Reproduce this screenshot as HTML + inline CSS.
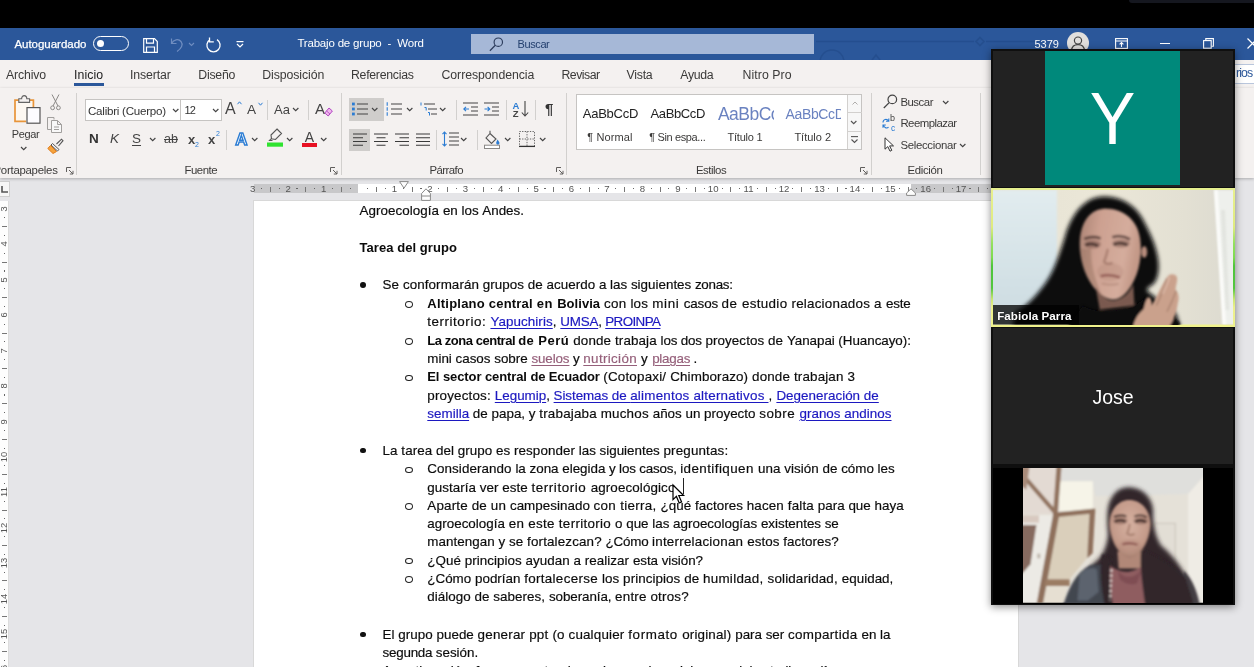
<!DOCTYPE html>
<html lang="es"><head><meta charset="utf-8"><title>Trabajo de grupo - Word</title>
<style>
*{box-sizing:border-box;margin:0;padding:0}
html,body{width:1254px;height:667px;overflow:hidden;background:#e5e5e8}
body{position:relative;font-family:"Liberation Sans",sans-serif;color:#262626;font-size:12px}
.a{position:absolute}
.gl{left:0;top:0;width:100%;height:100%;will-change:transform}
.t{position:absolute;white-space:nowrap;line-height:1}
#blk{left:0;top:0;width:1254px;height:28px;background:#000}
#ttl{left:0;top:28px;width:1254px;height:32px;background:#2b579a}
#ttl .t{color:#fff;font-size:11.5px}
#srch{left:471px;top:34px;width:343px;height:20px;background:#a6b8d7}
#tabs{left:0;top:60px;width:1254px;height:28px;background:#f4f1f0}
#tabs .t{font-size:12.3px;color:#3b3a39;top:9px}
#rib{left:0;top:88px;width:1254px;height:89.5px;background:#f4f1f0;box-shadow:0 1px 3px rgba(0,0,0,.25)}
#rib .t{font-size:11.4px;color:#3b3a39}
.sep{position:absolute;width:1px;background:#d2d0ce}
.box{position:absolute;background:#fff;border:1px solid #c6c4c2}
.hl{position:absolute;background:#cfcdcb}
svg{position:absolute;overflow:visible}
#page{left:254px;top:201.4px;width:764px;height:480px;background:#fff;box-shadow:0 0 0 1px #d8d8d8}
.ln{position:absolute;white-space:nowrap;font-size:13.4px;line-height:18px;height:18px;color:#0c0c0c;-webkit-text-stroke:0.18px #0c0c0c}
.ln b{font-weight:bold;color:#0a0a0a;font-size:13px;-webkit-text-stroke:0}
.lk{color:#1c18c0;-webkit-text-stroke-color:#1c18c0;text-decoration:underline;text-decoration-thickness:1px;text-underline-offset:2px}
.vl{color:#955f7a;-webkit-text-stroke-color:#955f7a;text-decoration:underline;text-decoration-thickness:1px;text-underline-offset:2px}
.bu{position:absolute;width:5.8px;height:5.8px;border-radius:50%;background:#111}
.ci{position:absolute;width:8px;height:6.8px;border-radius:50%;border:1.15px solid #222}
#zm{left:991px;top:49px;width:244px;height:556px;background:#0f0f0f;box-shadow:0 2px 8px rgba(0,0,0,.45)}
</style></head>
<body>
<div class="a" id="page"></div>
<div class="a" id="doctext" style="left:0;top:0;width:1254px;height:667px;will-change:transform">
<div class="ln" id="l1" style="left:359.5px;top:202.4px"><span class="sg" id="l1_0" style="letter-spacing:0.058px">Agroecología </span><span class="sg" id="l1_1" style="letter-spacing:-0.003px">en los </span><span class="sg" id="l1_2" style="letter-spacing:-0.017px">Andes.</span></div>
<div class="ln" id="l2" style="left:359.5px;top:239.4px"><span class="sg" id="l2_0" style="letter-spacing:0.062px"><b>Tarea del grupo</b></span></div>
<div class="ln" id="l3" style="left:382.6px;top:276.4px"><span class="sg" id="l3_0" style="letter-spacing:0.080px">Se conformarán </span><span class="sg" id="l3_1" style="letter-spacing:0.039px">grupos de acuerdo </span><span class="sg" id="l3_2" style="letter-spacing:0.004px">a las siguientes </span><span class="sg" id="l3_3" style="letter-spacing:-0.309px">zonas:</span></div>
<div class="bu" style="left:359.9px;top:282.0px"></div>
<div class="ln" id="l4" style="left:427.3px;top:295.0px"><span class="sg" id="l4_0" style="letter-spacing:0.228px"><b>Altiplano </b></span><span class="sg" id="l4_1" style="letter-spacing:0.206px"><b>central </b></span><span class="sg" id="l4_2" style="letter-spacing:0.568px"><b>en </b></span><span class="sg" id="l4_3" style="letter-spacing:0.043px"><b>Bolivia</b> </span><span class="sg" id="l4_4" style="letter-spacing:0.297px">con </span><span class="sg" id="l4_5" style="letter-spacing:0.239px">los </span><span class="sg" id="l4_6" style="letter-spacing:0.664px">mini </span><span class="sg" id="l4_7" style="letter-spacing:-0.151px">casos </span><span class="sg" id="l4_8" style="letter-spacing:0.592px">de </span><span class="sg" id="l4_9" style="letter-spacing:0.324px">estudio </span><span class="sg" id="l4_10" style="letter-spacing:0.219px">relacionados </span><span class="sg" id="l4_11" style="letter-spacing:0.414px">a </span><span class="sg" id="l4_12" style="letter-spacing:-0.178px">este</span></div>
<div class="ci" style="left:405.0px;top:301.2px"></div>
<div class="ln" id="l5" style="left:427.3px;top:313.2px"><span class="sg" id="l5_0" style="letter-spacing:0.549px">territorio: </span><span class="sg" id="l5_1" style="letter-spacing:0.076px"><span class="lk">Yapuchiris</span>, </span><span class="sg" id="l5_2" style="letter-spacing:-0.209px"><span class="lk">UMSA</span>, </span><span class="sg" id="l5_3" style="letter-spacing:-0.583px"><span class="lk">PROINPA</span></span></div>
<div class="ln" id="l6" style="left:427.3px;top:331.6px"><span class="sg" id="l6_0" style="letter-spacing:-0.459px"><b>La zona central </b></span><span class="sg" id="l6_1" style="letter-spacing:0.460px"><b>de Perú</b> </span><span class="sg" id="l6_2" style="letter-spacing:0.120px">donde trabaja </span><span class="sg" id="l6_3" style="letter-spacing:-0.170px">los dos </span><span class="sg" id="l6_4" style="letter-spacing:0.088px">proyectos de </span><span class="sg" id="l6_5" style="letter-spacing:-0.059px">Yanapai </span><span class="sg" id="l6_6" style="letter-spacing:-0.040px">(Huancayo):</span></div>
<div class="ci" style="left:405.0px;top:337.8px"></div>
<div class="ln" id="l7" style="left:427.3px;top:349.9px"><span class="sg" id="l7_0" style="letter-spacing:-0.006px">mini casos sobre </span><span class="sg" id="l7_1" style="letter-spacing:-0.107px"><span class="vl">suelos</span> y </span><span class="sg" id="l7_2" style="letter-spacing:0.345px"><span class="vl">nutrición</span> y </span><span class="sg" id="l7_3" style="letter-spacing:-0.265px"><span class="vl">plagas</span> .</span></div>
<div class="ln" id="l8" style="left:427.3px;top:368.3px"><span class="sg" id="l8_0" style="letter-spacing:-0.093px"><b>El sector central </b></span><span class="sg" id="l8_1" style="letter-spacing:-0.157px"><b>de Ecuador</b> </span><span class="sg" id="l8_2" style="letter-spacing:0.205px">(Cotopaxi/ </span><span class="sg" id="l8_3" style="letter-spacing:0.119px">Chimborazo) </span><span class="sg" id="l8_4" style="letter-spacing:0.155px">donde trabajan 3</span></div>
<div class="ci" style="left:405.0px;top:374.5px"></div>
<div class="ln" id="l9" style="left:427.3px;top:386.6px"><span class="sg" id="l9_0" style="letter-spacing:0.182px">proyectos: </span><span class="sg" id="l9_1" style="letter-spacing:-0.003px"><span class="lk">Legumip</span>, </span><span class="sg" id="l9_2" style="letter-spacing:-0.067px"><span class="lk">Sistemas de </span></span><span class="sg" id="l9_3" style="letter-spacing:0.220px"><span class="lk">alimentos alternativos </span>, </span><span class="sg" id="l9_4" style="letter-spacing:0.027px"><span class="lk">Degeneración de</span></span></div>
<div class="ln" id="l10" style="left:427.3px;top:404.9px"><span class="sg" id="l10_0" style="letter-spacing:0.018px"><span class="lk">semilla</span> de papa, y </span><span class="sg" id="l10_1" style="letter-spacing:0.190px">trabajaba muchos </span><span class="sg" id="l10_2" style="letter-spacing:0.003px">años un proyecto </span><span class="sg" id="l10_3" style="letter-spacing:0.497px">sobre </span><span class="sg" id="l10_4" style="letter-spacing:0.037px"><span class="lk">granos andinos</span></span></div>
<div class="ln" id="l11" style="left:382.6px;top:441.9px"><span class="sg" id="l11_0" style="letter-spacing:0.051px">La tarea del grupo </span><span class="sg" id="l11_1" style="letter-spacing:0.070px">es responder </span><span class="sg" id="l11_2" style="letter-spacing:-0.011px">las siguientes </span><span class="sg" id="l11_3" style="letter-spacing:0.152px">preguntas:</span></div>
<div class="bu" style="left:359.9px;top:447.5px"></div>
<div class="ln" id="l12" style="left:427.3px;top:460.4px"><span class="sg" id="l12_0" style="letter-spacing:0.076px">Considerando </span><span class="sg" id="l12_1" style="letter-spacing:-0.007px">la zona elegida </span><span class="sg" id="l12_2" style="letter-spacing:-0.199px">y los casos, </span><span class="sg" id="l12_3" style="letter-spacing:0.429px">identifiquen </span><span class="sg" id="l12_4" style="letter-spacing:0.052px">una visión </span><span class="sg" id="l12_5" style="letter-spacing:-0.018px">de cómo les</span></div>
<div class="ci" style="left:405.0px;top:466.6px"></div>
<div class="ln" id="l13" style="left:427.3px;top:478.7px"><span class="sg" id="l13_0" style="letter-spacing:0.035px">gustaría ver este </span><span class="sg" id="l13_1" style="letter-spacing:0.587px">territorio </span><span class="sg" id="l13_2" style="letter-spacing:0.108px">agroecológico</span></div>
<div class="ln" id="l14" style="left:427.3px;top:497.2px"><span class="sg" id="l14_0" style="letter-spacing:0.169px">Aparte de un </span><span class="sg" id="l14_1" style="letter-spacing:0.027px">campesinado </span><span class="sg" id="l14_2" style="letter-spacing:0.311px">con tierra, </span><span class="sg" id="l14_3" style="letter-spacing:0.035px">¿qué factores </span><span class="sg" id="l14_4" style="letter-spacing:0.154px">hacen falta </span><span class="sg" id="l14_5" style="letter-spacing:0.013px">para que haya</span></div>
<div class="ci" style="left:405.0px;top:503.4px"></div>
<div class="ln" id="l15" style="left:427.3px;top:515.0px"><span class="sg" id="l15_0" style="letter-spacing:0.019px">agroecología </span><span class="sg" id="l15_1" style="letter-spacing:0.311px">en este territorio </span><span class="sg" id="l15_2" style="letter-spacing:-0.008px">o que las </span><span class="sg" id="l15_3" style="letter-spacing:-0.003px">agroecologías </span><span class="sg" id="l15_4" style="letter-spacing:-0.020px">existentes se</span></div>
<div class="ln" id="l16" style="left:427.3px;top:533.1px"><span class="sg" id="l16_0" style="letter-spacing:0.052px">mantengan y se </span><span class="sg" id="l16_1" style="letter-spacing:0.141px">fortalezcan? </span><span class="sg" id="l16_2" style="letter-spacing:-0.204px">¿Cómo </span><span class="sg" id="l16_3" style="letter-spacing:0.227px">interrelacionan </span><span class="sg" id="l16_4" style="letter-spacing:0.052px">estos factores?</span></div>
<div class="ln" id="l17" style="left:427.3px;top:551.5px"><span class="sg" id="l17_0" style="letter-spacing:0.037px">¿Qué principios </span><span class="sg" id="l17_1" style="letter-spacing:0.058px">ayudan a realizar </span><span class="sg" id="l17_2" style="letter-spacing:-0.052px">esta visión?</span></div>
<div class="ci" style="left:405.0px;top:557.7px"></div>
<div class="ln" id="l18" style="left:427.3px;top:570.0px"><span class="sg" id="l18_0" style="letter-spacing:0.010px">¿Cómo podrían </span><span class="sg" id="l18_1" style="letter-spacing:0.316px">fortalecerse </span><span class="sg" id="l18_2" style="letter-spacing:0.069px">los principios de </span><span class="sg" id="l18_3" style="letter-spacing:0.280px">humildad, </span><span class="sg" id="l18_4" style="letter-spacing:0.145px">solidaridad, </span><span class="sg" id="l18_5" style="letter-spacing:0.039px">equidad,</span></div>
<div class="ci" style="left:405.0px;top:576.2px"></div>
<div class="ln" id="l19" style="left:427.3px;top:588.2px"><span class="sg" id="l19_0" style="letter-spacing:0.050px">diálogo de saberes, </span><span class="sg" id="l19_1" style="letter-spacing:-0.073px">soberanía, </span><span class="sg" id="l19_2" style="letter-spacing:0.186px">entre otros?</span></div>
<div class="ln" id="l20" style="left:382.6px;top:626.0px"><span class="sg" id="l20_0" style="letter-spacing:0.029px">El grupo puede </span><span class="sg" id="l20_1" style="letter-spacing:0.215px">generar ppt </span><span class="sg" id="l20_2" style="letter-spacing:0.169px">(o cualquier </span><span class="sg" id="l20_3" style="letter-spacing:0.597px">formato </span><span class="sg" id="l20_4" style="letter-spacing:0.174px">original) </span><span class="sg" id="l20_5" style="letter-spacing:-0.027px">para ser </span><span class="sg" id="l20_6" style="letter-spacing:0.339px">compartida </span><span class="sg" id="l20_7" style="letter-spacing:-0.029px">en la</span></div>
<div class="bu" style="left:359.9px;top:631.6px"></div>
<div class="ln" id="l21" style="left:382.6px;top:643.8px"><span class="sg" id="l21_0" style="letter-spacing:-0.251px">segunda </span><span class="sg" id="l21_1" style="letter-spacing:0.023px">sesión.</span></div>
<div class="ln" id="l22" style="left:382.6px;top:662.2px"><span class="sg" id="l22_0" style="letter-spacing:-0.096px">A continuación, favor encontrar los enlaces a los mini casos del estudio en línea</span></div>
<div class="bu" style="left:359.9px;top:667.8px"></div>
</div>
<div class="a" style="left:683px;top:478px;width:1.1px;height:16px;background:#222"></div>
<svg style="left:672.2px;top:484px" width="13" height="20" viewBox="0 0 13 20"><path d="M1 1 V15.6 L4.4 12.4 L7.2 19 L9.6 17.9 L6.8 11.5 H11.6 Z" fill="#fff" stroke="#000" stroke-width="1.2"/></svg>
<div class="a gl" style="width:1254px;height:667px">
<div class="a" style="left:0;top:181px;width:10px;height:16px;background:#f6f6f6;border:1px solid #cfcfcf;border-left:0"></div>
<svg style="left:1px;top:186px" width="7" height="7"><path d="M1 0 V6 H7" fill="none" stroke="#555" stroke-width="1.6"/></svg>
<div class="a" style="left:254px;top:183.6px;width:104px;height:9.4px;background:#c8c8ca"></div>
<div class="a" style="left:358px;top:183.6px;width:553px;height:9.4px;background:#fff"></div>
<div class="a" style="left:911px;top:183.6px;width:85px;height:9.4px;background:#c8c8ca"></div>
<span class="t" style="left:242.7px;top:184px;width:20px;text-align:center;font-size:9.6px;color:#555">3</span>
<div class="a" style="left:261.0px;top:188px;width:1.2px;height:1.4px;background:#666"></div>
<div class="a" style="left:269.9px;top:186.5px;width:1px;height:5px;background:#777"></div>
<div class="a" style="left:278.7px;top:188px;width:1.2px;height:1.4px;background:#666"></div>
<span class="t" style="left:278.2px;top:184px;width:20px;text-align:center;font-size:9.6px;color:#555">2</span>
<div class="a" style="left:296.4px;top:188px;width:1.2px;height:1.4px;background:#666"></div>
<div class="a" style="left:305.4px;top:186.5px;width:1px;height:5px;background:#777"></div>
<div class="a" style="left:314.1px;top:188px;width:1.2px;height:1.4px;background:#666"></div>
<span class="t" style="left:313.6px;top:184px;width:20px;text-align:center;font-size:9.6px;color:#555">1</span>
<div class="a" style="left:331.8px;top:188px;width:1.2px;height:1.4px;background:#666"></div>
<div class="a" style="left:340.8px;top:186.5px;width:1px;height:5px;background:#777"></div>
<div class="a" style="left:349.5px;top:188px;width:1.2px;height:1.4px;background:#666"></div>
<div class="a" style="left:367.3px;top:188px;width:1.2px;height:1.4px;background:#666"></div>
<div class="a" style="left:376.2px;top:186.5px;width:1px;height:5px;background:#777"></div>
<div class="a" style="left:385.0px;top:188px;width:1.2px;height:1.4px;background:#666"></div>
<span class="t" style="left:384.4px;top:184px;width:20px;text-align:center;font-size:9.6px;color:#555">1</span>
<div class="a" style="left:402.7px;top:188px;width:1.2px;height:1.4px;background:#666"></div>
<div class="a" style="left:411.6px;top:186.5px;width:1px;height:5px;background:#777"></div>
<div class="a" style="left:420.4px;top:188px;width:1.2px;height:1.4px;background:#666"></div>
<span class="t" style="left:419.8px;top:184px;width:20px;text-align:center;font-size:9.6px;color:#555">2</span>
<div class="a" style="left:438.1px;top:188px;width:1.2px;height:1.4px;background:#666"></div>
<div class="a" style="left:447.1px;top:186.5px;width:1px;height:5px;background:#777"></div>
<div class="a" style="left:455.8px;top:188px;width:1.2px;height:1.4px;background:#666"></div>
<span class="t" style="left:455.3px;top:184px;width:20px;text-align:center;font-size:9.6px;color:#555">3</span>
<div class="a" style="left:473.5px;top:188px;width:1.2px;height:1.4px;background:#666"></div>
<div class="a" style="left:482.5px;top:186.5px;width:1px;height:5px;background:#777"></div>
<div class="a" style="left:491.2px;top:188px;width:1.2px;height:1.4px;background:#666"></div>
<span class="t" style="left:490.7px;top:184px;width:20px;text-align:center;font-size:9.6px;color:#555">4</span>
<div class="a" style="left:508.9px;top:188px;width:1.2px;height:1.4px;background:#666"></div>
<div class="a" style="left:517.9px;top:186.5px;width:1px;height:5px;background:#777"></div>
<div class="a" style="left:526.6px;top:188px;width:1.2px;height:1.4px;background:#666"></div>
<span class="t" style="left:526.1px;top:184px;width:20px;text-align:center;font-size:9.6px;color:#555">5</span>
<div class="a" style="left:544.4px;top:188px;width:1.2px;height:1.4px;background:#666"></div>
<div class="a" style="left:553.3px;top:186.5px;width:1px;height:5px;background:#777"></div>
<div class="a" style="left:562.1px;top:188px;width:1.2px;height:1.4px;background:#666"></div>
<span class="t" style="left:561.5px;top:184px;width:20px;text-align:center;font-size:9.6px;color:#555">6</span>
<div class="a" style="left:579.8px;top:188px;width:1.2px;height:1.4px;background:#666"></div>
<div class="a" style="left:588.7px;top:186.5px;width:1px;height:5px;background:#777"></div>
<div class="a" style="left:597.5px;top:188px;width:1.2px;height:1.4px;background:#666"></div>
<span class="t" style="left:596.9px;top:184px;width:20px;text-align:center;font-size:9.6px;color:#555">7</span>
<div class="a" style="left:615.2px;top:188px;width:1.2px;height:1.4px;background:#666"></div>
<div class="a" style="left:624.2px;top:186.5px;width:1px;height:5px;background:#777"></div>
<div class="a" style="left:632.9px;top:188px;width:1.2px;height:1.4px;background:#666"></div>
<span class="t" style="left:632.4px;top:184px;width:20px;text-align:center;font-size:9.6px;color:#555">8</span>
<div class="a" style="left:650.6px;top:188px;width:1.2px;height:1.4px;background:#666"></div>
<div class="a" style="left:659.6px;top:186.5px;width:1px;height:5px;background:#777"></div>
<div class="a" style="left:668.3px;top:188px;width:1.2px;height:1.4px;background:#666"></div>
<span class="t" style="left:667.8px;top:184px;width:20px;text-align:center;font-size:9.6px;color:#555">9</span>
<div class="a" style="left:686.0px;top:188px;width:1.2px;height:1.4px;background:#666"></div>
<div class="a" style="left:695.0px;top:186.5px;width:1px;height:5px;background:#777"></div>
<div class="a" style="left:703.7px;top:188px;width:1.2px;height:1.4px;background:#666"></div>
<span class="t" style="left:703.2px;top:184px;width:20px;text-align:center;font-size:9.6px;color:#555">10</span>
<div class="a" style="left:721.5px;top:188px;width:1.2px;height:1.4px;background:#666"></div>
<div class="a" style="left:730.4px;top:186.5px;width:1px;height:5px;background:#777"></div>
<div class="a" style="left:739.2px;top:188px;width:1.2px;height:1.4px;background:#666"></div>
<span class="t" style="left:738.6px;top:184px;width:20px;text-align:center;font-size:9.6px;color:#555">11</span>
<div class="a" style="left:756.9px;top:188px;width:1.2px;height:1.4px;background:#666"></div>
<div class="a" style="left:765.8px;top:186.5px;width:1px;height:5px;background:#777"></div>
<div class="a" style="left:774.6px;top:188px;width:1.2px;height:1.4px;background:#666"></div>
<span class="t" style="left:774.0px;top:184px;width:20px;text-align:center;font-size:9.6px;color:#555">12</span>
<div class="a" style="left:792.3px;top:188px;width:1.2px;height:1.4px;background:#666"></div>
<div class="a" style="left:801.2px;top:186.5px;width:1px;height:5px;background:#777"></div>
<div class="a" style="left:810.0px;top:188px;width:1.2px;height:1.4px;background:#666"></div>
<span class="t" style="left:809.5px;top:184px;width:20px;text-align:center;font-size:9.6px;color:#555">13</span>
<div class="a" style="left:827.7px;top:188px;width:1.2px;height:1.4px;background:#666"></div>
<div class="a" style="left:836.7px;top:186.5px;width:1px;height:5px;background:#777"></div>
<div class="a" style="left:845.4px;top:188px;width:1.2px;height:1.4px;background:#666"></div>
<span class="t" style="left:844.9px;top:184px;width:20px;text-align:center;font-size:9.6px;color:#555">14</span>
<div class="a" style="left:863.1px;top:188px;width:1.2px;height:1.4px;background:#666"></div>
<div class="a" style="left:872.1px;top:186.5px;width:1px;height:5px;background:#777"></div>
<div class="a" style="left:880.8px;top:188px;width:1.2px;height:1.4px;background:#666"></div>
<span class="t" style="left:880.3px;top:184px;width:20px;text-align:center;font-size:9.6px;color:#555">15</span>
<div class="a" style="left:898.6px;top:188px;width:1.2px;height:1.4px;background:#666"></div>
<div class="a" style="left:907.5px;top:186.5px;width:1px;height:5px;background:#777"></div>
<div class="a" style="left:916.3px;top:188px;width:1.2px;height:1.4px;background:#666"></div>
<span class="t" style="left:915.7px;top:184px;width:20px;text-align:center;font-size:9.6px;color:#555">16</span>
<div class="a" style="left:934.0px;top:188px;width:1.2px;height:1.4px;background:#666"></div>
<div class="a" style="left:942.9px;top:186.5px;width:1px;height:5px;background:#777"></div>
<div class="a" style="left:951.7px;top:188px;width:1.2px;height:1.4px;background:#666"></div>
<span class="t" style="left:951.1px;top:184px;width:20px;text-align:center;font-size:9.6px;color:#555">17</span>
<div class="a" style="left:969.4px;top:188px;width:1.2px;height:1.4px;background:#666"></div>
<div class="a" style="left:978.4px;top:186.5px;width:1px;height:5px;background:#777"></div>
<div class="a" style="left:987.1px;top:188px;width:1.2px;height:1.4px;background:#666"></div>
<svg style="left:399px;top:181px" width="10" height="8" viewBox="0 0 10 8"><path d="M0.6 0.6 H9.4 L5 7.2 Z" fill="#fdfdfd" stroke="#8a8a8a" stroke-width="1"/></svg>
<svg style="left:421px;top:188px" width="10" height="13" viewBox="0 0 10 13"><path d="M0.6 5.5 L5 0.8 L9.4 5.5 V8 H0.6 Z M0.6 8 V12.4 H9.4 V8" fill="#fdfdfd" stroke="#8a8a8a" stroke-width="1"/></svg>
<svg style="left:906px;top:188px" width="10" height="8" viewBox="0 0 10 8"><path d="M0.6 7.4 V5 L5 0.8 L9.4 5 V7.4 Z" fill="#fdfdfd" stroke="#8a8a8a" stroke-width="1"/></svg>
<div class="a" style="left:0;top:201px;width:8.5px;height:470px;background:#fdfdfd;border-right:1px solid #dcdcdc"></div>
<span class="t" style="left:-6px;top:204.0px;width:20px;height:10px;text-align:center;font-size:9.4px;color:#555;transform:rotate(-90deg)">3</span>
<div class="a" style="left:3.5px;top:217.3px;width:1.4px;height:1.2px;background:#666"></div>
<div class="a" style="left:2px;top:226.2px;width:5px;height:1px;background:#777"></div>
<div class="a" style="left:3.5px;top:235.0px;width:1.4px;height:1.2px;background:#666"></div>
<span class="t" style="left:-6px;top:239.4px;width:20px;height:10px;text-align:center;font-size:9.4px;color:#555;transform:rotate(-90deg)">4</span>
<div class="a" style="left:3.5px;top:252.7px;width:1.4px;height:1.2px;background:#666"></div>
<div class="a" style="left:2px;top:261.6px;width:5px;height:1px;background:#777"></div>
<div class="a" style="left:3.5px;top:270.4px;width:1.4px;height:1.2px;background:#666"></div>
<span class="t" style="left:-6px;top:274.8px;width:20px;height:10px;text-align:center;font-size:9.4px;color:#555;transform:rotate(-90deg)">5</span>
<div class="a" style="left:3.5px;top:288.1px;width:1.4px;height:1.2px;background:#666"></div>
<div class="a" style="left:2px;top:297.1px;width:5px;height:1px;background:#777"></div>
<div class="a" style="left:3.5px;top:305.8px;width:1.4px;height:1.2px;background:#666"></div>
<span class="t" style="left:-6px;top:310.3px;width:20px;height:10px;text-align:center;font-size:9.4px;color:#555;transform:rotate(-90deg)">6</span>
<div class="a" style="left:3.5px;top:323.5px;width:1.4px;height:1.2px;background:#666"></div>
<div class="a" style="left:2px;top:332.5px;width:5px;height:1px;background:#777"></div>
<div class="a" style="left:3.5px;top:341.2px;width:1.4px;height:1.2px;background:#666"></div>
<span class="t" style="left:-6px;top:345.7px;width:20px;height:10px;text-align:center;font-size:9.4px;color:#555;transform:rotate(-90deg)">7</span>
<div class="a" style="left:3.5px;top:358.9px;width:1.4px;height:1.2px;background:#666"></div>
<div class="a" style="left:2px;top:367.9px;width:5px;height:1px;background:#777"></div>
<div class="a" style="left:3.5px;top:376.6px;width:1.4px;height:1.2px;background:#666"></div>
<span class="t" style="left:-6px;top:381.1px;width:20px;height:10px;text-align:center;font-size:9.4px;color:#555;transform:rotate(-90deg)">8</span>
<div class="a" style="left:3.5px;top:394.4px;width:1.4px;height:1.2px;background:#666"></div>
<div class="a" style="left:2px;top:403.3px;width:5px;height:1px;background:#777"></div>
<div class="a" style="left:3.5px;top:412.1px;width:1.4px;height:1.2px;background:#666"></div>
<span class="t" style="left:-6px;top:416.5px;width:20px;height:10px;text-align:center;font-size:9.4px;color:#555;transform:rotate(-90deg)">9</span>
<div class="a" style="left:3.5px;top:429.8px;width:1.4px;height:1.2px;background:#666"></div>
<div class="a" style="left:2px;top:438.7px;width:5px;height:1px;background:#777"></div>
<div class="a" style="left:3.5px;top:447.5px;width:1.4px;height:1.2px;background:#666"></div>
<span class="t" style="left:-6px;top:451.9px;width:20px;height:10px;text-align:center;font-size:9.4px;color:#555;transform:rotate(-90deg)">10</span>
<div class="a" style="left:3.5px;top:465.2px;width:1.4px;height:1.2px;background:#666"></div>
<div class="a" style="left:2px;top:474.2px;width:5px;height:1px;background:#777"></div>
<div class="a" style="left:3.5px;top:482.9px;width:1.4px;height:1.2px;background:#666"></div>
<span class="t" style="left:-6px;top:487.4px;width:20px;height:10px;text-align:center;font-size:9.4px;color:#555;transform:rotate(-90deg)">11</span>
<div class="a" style="left:3.5px;top:500.6px;width:1.4px;height:1.2px;background:#666"></div>
<div class="a" style="left:2px;top:509.6px;width:5px;height:1px;background:#777"></div>
<div class="a" style="left:3.5px;top:518.3px;width:1.4px;height:1.2px;background:#666"></div>
<span class="t" style="left:-6px;top:522.8px;width:20px;height:10px;text-align:center;font-size:9.4px;color:#555;transform:rotate(-90deg)">12</span>
<div class="a" style="left:3.5px;top:536.0px;width:1.4px;height:1.2px;background:#666"></div>
<div class="a" style="left:2px;top:545.0px;width:5px;height:1px;background:#777"></div>
<div class="a" style="left:3.5px;top:553.7px;width:1.4px;height:1.2px;background:#666"></div>
<span class="t" style="left:-6px;top:558.2px;width:20px;height:10px;text-align:center;font-size:9.4px;color:#555;transform:rotate(-90deg)">13</span>
<div class="a" style="left:3.5px;top:571.5px;width:1.4px;height:1.2px;background:#666"></div>
<div class="a" style="left:2px;top:580.4px;width:5px;height:1px;background:#777"></div>
<div class="a" style="left:3.5px;top:589.2px;width:1.4px;height:1.2px;background:#666"></div>
<span class="t" style="left:-6px;top:593.6px;width:20px;height:10px;text-align:center;font-size:9.4px;color:#555;transform:rotate(-90deg)">14</span>
<div class="a" style="left:3.5px;top:606.9px;width:1.4px;height:1.2px;background:#666"></div>
<div class="a" style="left:2px;top:615.8px;width:5px;height:1px;background:#777"></div>
<div class="a" style="left:3.5px;top:624.6px;width:1.4px;height:1.2px;background:#666"></div>
<span class="t" style="left:-6px;top:629.0px;width:20px;height:10px;text-align:center;font-size:9.4px;color:#555;transform:rotate(-90deg)">15</span>
<div class="a" style="left:3.5px;top:642.3px;width:1.4px;height:1.2px;background:#666"></div>
<div class="a" style="left:2px;top:651.3px;width:5px;height:1px;background:#777"></div>
<div class="a" style="left:3.5px;top:660.0px;width:1.4px;height:1.2px;background:#666"></div>
<span class="t" style="left:-6px;top:664.5px;width:20px;height:10px;text-align:center;font-size:9.4px;color:#555;transform:rotate(-90deg)">16</span>
<div class="a" style="left:3.5px;top:677.7px;width:1.4px;height:1.2px;background:#666"></div>
<div class="a" style="left:2px;top:686.7px;width:5px;height:1px;background:#777"></div>
<div class="a" style="left:3.5px;top:695.4px;width:1.4px;height:1.2px;background:#666"></div>
</div>
<div class="a" id="blk"></div>
<div class="a" style="left:1129px;top:0;width:125px;height:2.7px;background:#15171f;border-bottom-left-radius:3px"></div>
<div class="a" id="ttl"><div class="a gl">
<span class="t" style="left:14px;top:10.6px;-webkit-text-stroke:.25px #fff;left:14.4px;letter-spacing:-0.022px" id="t_auto">Autoguardado</span>
<div class="a" style="left:93px;top:8px;width:36px;height:15px;border:1.3px solid #fff;border-radius:8px"></div>
<div class="a" style="left:97px;top:12px;width:7px;height:7px;border-radius:50%;background:#fff"></div>
<svg style="left:143px;top:9.5px" width="15" height="15" viewBox="0 0 15 15"><path d="M0.7 0.7 H11.5 L14.3 3.5 V14.3 H0.7 Z M3.5 0.7 V5.2 H10.5 V0.7 M3.5 14.3 V9 H11.5 V14.3" fill="none" stroke="#fff" stroke-width="1.2"/></svg>
<svg style="left:170px;top:9px" width="16" height="16" viewBox="0 0 16 16"><path d="M1.5 1.5 V6.5 H6.5 M1.8 6.3 C3.5 2.5 8.5 1.5 11 4.5 C13.5 7.5 11.5 11.5 7 14.5" fill="none" stroke="#6f8dc0" stroke-width="1.2"/></svg>
<svg class="a" style="left:189px;top:15px" width="5" height="3.5"><path d="M0 0 L2.5 2.5 L5 0" fill="none" stroke="#6f8dc0" stroke-width="1.1"/></svg>
<svg style="left:204.5px;top:9px" width="17" height="17" viewBox="0 0 17 17"><path d="M5 2.6 A6.6 6.6 0 1 0 12 2.6 M12.5 0.5 V4.8 H8.2" fill="none" stroke="#fff" stroke-width="1.3" transform="translate(17,0) scale(-1,1)"/></svg>
<svg style="left:236px;top:13px" width="8" height="7" viewBox="0 0 8 7"><path d="M0.5 0.6 H7.5" stroke="#fff" stroke-width="1.2"/><path d="M1 3 L4 6 L7 3" fill="none" stroke="#fff" stroke-width="1.2"/></svg>
<svg style="left:810px;top:0;overflow:hidden" width="260" height="32" viewBox="0 0 260 32"><g fill="none" stroke="#244d8c" stroke-width="1.6" opacity=".8"><path d="M6 13.5 H164 M176 13.5 H230"/><path d="M170 9.5 L174 13.5 L170 17.5 L166 13.5 Z"/><circle cx="22" cy="34" r="12"/><path d="M62 32 L66 27 L70 32"/></g></svg>
<span class="t" style="left:297px;top:10px;left:297.4px;letter-spacing:-0.186px" id="t_title">Trabajo de grupo&nbsp; -&nbsp; Word</span>
</div></div>
<div class="a" id="srch"></div><div class="a gl" style="height:60px">
<svg style="left:488.5px;top:36.8px" width="15" height="15" viewBox="0 0 15 15"><circle cx="9.3" cy="5.2" r="4.2" fill="none" stroke="#2c3c5c" stroke-width="1.15"/><path d="M6.3 8.3 L0.9 13.7" stroke="#2c3c5c" stroke-width="1.25"/></svg>
<span class="t" style="left:517px;top:39px;color:#24406f;font-size:11px;left:517.5px;letter-spacing:-0.392px" id="t_buscar0">Buscar</span>
<span class="t" style="left:1034px;top:39px;color:#fff;font-size:11px;letter-spacing:-.6px;left:1034.4px;letter-spacing:0.030px" id="t_5379">5379</span>
<div class="a" style="left:1067px;top:32px;width:22px;height:22px;border-radius:50%;background:#e1dfdd"></div>
<svg style="left:1067px;top:32px" width="22" height="22" viewBox="0 0 22 22"><circle cx="11" cy="8.6" r="3.6" fill="none" stroke="#444" stroke-width="1.2"/><path d="M4.5 18.5 C5 13.5 8 12.6 11 12.6 C14 12.6 17 13.5 17.5 18.5" fill="none" stroke="#444" stroke-width="1.2"/></svg>
<svg style="left:1115px;top:38px" width="13" height="11" viewBox="0 0 13 11"><rect x="0.6" y="0.6" width="11.8" height="9.8" fill="none" stroke="#fff" stroke-width="1.1"/><path d="M0.6 3 H12.4 M6.5 9 V4.6 M4.6 6.4 L6.5 4.5 L8.4 6.4" fill="none" stroke="#fff" stroke-width="1.1"/></svg>
<div class="a" style="left:1160px;top:43px;width:10px;height:1.3px;background:#fff"></div>
<svg style="left:1203px;top:38px" width="11" height="11" viewBox="0 0 11 11"><rect x="0.6" y="2.6" width="7.6" height="7.6" fill="none" stroke="#fff" stroke-width="1.1"/><path d="M2.8 2.6 V0.6 H10.4 V8.2 H8.4" fill="none" stroke="#fff" stroke-width="1.1"/></svg>
<svg style="left:1247px;top:38px" width="11" height="11" viewBox="0 0 11 11"><path d="M0.5 0.5 L10.5 10.5 M10.5 0.5 L0.5 10.5" stroke="#fff" stroke-width="1.2"/></svg>
</div>
<div class="a" id="tabs"><div class="a gl">
<span class="t" style="left:5px;left:6.0px;letter-spacing:-0.159px" id="tab0">Archivo</span>
<span class="t" style="left:73px;color:#222;left:74.0px;letter-spacing:0.064px" id="tab1">Inicio</span>
<span class="t" style="left:129px;left:129.9px;letter-spacing:-0.100px" id="tab2">Insertar</span>
<span class="t" style="left:197px;left:198.3px;letter-spacing:-0.247px" id="tab3">Diseño</span>
<span class="t" style="left:261px;left:262.2px;letter-spacing:-0.081px" id="tab4">Disposición</span>
<span class="t" style="left:351px;left:351.0px;letter-spacing:-0.275px" id="tab5">Referencias</span>
<span class="t" style="left:441px;left:441.5px;letter-spacing:-0.057px" id="tab6">Correspondencia</span>
<span class="t" style="left:560px;left:561.5px;letter-spacing:-0.512px" id="tab7">Revisar</span>
<span class="t" style="left:626px;left:626.5px;letter-spacing:-0.245px" id="tab8">Vista</span>
<span class="t" style="left:679px;left:680.2px;letter-spacing:-0.291px" id="tab9">Ayuda</span>
<span class="t" style="left:741px;left:742.5px;letter-spacing:0.065px" id="tab10">Nitro Pro</span>
<div class="a" style="left:73.8px;top:23px;width:30.4px;height:2.8px;background:#2b579a"></div>
<div class="a" style="left:1228px;top:4px;width:40px;height:20px;border:1px solid #b9c6dc;background:#fff"></div>
<span class="t" style="left:1236px;top:7px;color:#2b579a;font-size:12.3px;left:1236.0px;letter-spacing:-0.907px" id="t_rios">rios</span>
</div></div>
<div class="a" id="rib"><div class="a gl">
<svg style="left:13px;top:6px" width="28" height="31" viewBox="0 0 28 31"><rect x="2" y="6.2" width="18.4" height="21" fill="#fdf8f2"/><path d="M13 27.3 H2 V6.2 H20.4 V13" fill="none" stroke="#e8953a" stroke-width="1.7"/><path d="M5.8 8.4 V4.8 H8.6 C8.6 0.6 13.8 0.6 13.8 4.8 H16.6 V8.4 Z" fill="#f4f1f0" stroke="#666" stroke-width="1.1"/><rect x="14" y="13.6" width="13" height="15.6" fill="#fdfcff" stroke="#555" stroke-width="1.2"/></svg>
<span class="t" style="left:11px;top:41px;font-size:11px;left:11.7px;letter-spacing:-0.372px" id="t_pegar">Pegar</span>
<svg class="a" style="left:21.3px;top:59px" width="5.4" height="3.7"><path d="M0 0 L2.7 2.7 L5.4 0" fill="none" stroke="#444" stroke-width="1.15"/></svg>
<svg style="left:50px;top:6px" width="11" height="17" viewBox="0 0 11 17"><path d="M2 0.5 L8 12 M9 0.5 L3 12" stroke="#8a8886" stroke-width="1" fill="none"/><circle cx="2.6" cy="13.8" r="1.9" fill="none" stroke="#8a8886" stroke-width="1"/><circle cx="8.4" cy="13.8" r="1.9" fill="none" stroke="#8a8886" stroke-width="1"/></svg>
<svg style="left:47px;top:29px" width="16" height="16" viewBox="0 0 16 16"><path d="M4.5 12.5 H0.5 V0.5 H7 V2.5" fill="none" stroke="#a19f9d" stroke-width="1"/><path d="M4.5 3.5 H10.5 L14.5 7.5 V15.5 H4.5 Z M10.5 3.5 V7.5 H14.5" fill="#f8f8f8" stroke="#a19f9d" stroke-width="1"/><path d="M7 10 H12 M7 12.5 H12" stroke="#a19f9d" stroke-width="1"/></svg>
<svg style="left:47px;top:50px" width="17" height="16" viewBox="0 0 17 16"><path d="M9.5 6 L14.5 1.2 L16 2.7 L11.5 8" fill="none" stroke="#555" stroke-width="1.1"/><path d="M5.5 5.5 L12 11.5 L10.5 13 L4 7 Z" fill="#f4f1f0" stroke="#555" stroke-width="1"/><path d="M3.5 7.5 L9.5 13.5 L6 15.5 L0.8 10.5 Z" fill="#f5a33c" stroke="#e07b1a" stroke-width="1"/></svg>
<span class="t" style="left:-3px;top:77px;left:-6.5px;letter-spacing:-0.253px" id="t_porta">Portapapeles</span>
<svg style="left:66px;top:79px" width="8" height="8" viewBox="0 0 8 8"><path d="M0.5 5 V0.5 H5" fill="none" stroke="#605e5c" stroke-width="1"/><path d="M3 3 L7 7 M7 3.8 V7 H3.8" fill="none" stroke="#605e5c" stroke-width="1"/></svg>
<div class="sep" style="left:76px;top:5px;height:82px"></div>
<div class="box" style="left:85px;top:11px;width:96px;height:22px"></div>
<div class="box" style="left:180px;top:11px;width:42px;height:22px"></div>
<span class="t" style="left:88px;top:16.5px;font-size:11.6px;color:#333;left:88.0px;letter-spacing:-0.252px" id="t_calibri">Calibri (Cuerpo)</span>
<svg class="a" style="left:172.60000000000002px;top:21px" width="5.4" height="3.7"><path d="M0 0 L2.7 2.7 L5.4 0" fill="none" stroke="#444" stroke-width="1.15"/></svg>
<span class="t" style="left:184px;top:17px;font-size:11px;color:#333;left:184.5px;letter-spacing:-0.775px" id="t_12">12</span>
<svg class="a" style="left:213.10000000000002px;top:21px" width="5.4" height="3.7"><path d="M0 0 L2.7 2.7 L5.4 0" fill="none" stroke="#444" stroke-width="1.15"/></svg>
<span class="t" style="left:225px;top:12.8px;font-size:16px;color:#444" id="t_Ag">A</span>
<svg style="left:236.5px;top:13px" width="5" height="4"><path d="M0.5 3.2 L2.5 0.8 L4.5 3.2" fill="none" stroke="#2b7cd3" stroke-width="1"/></svg>
<span class="t" style="left:247px;top:14.6px;font-size:13.6px;color:#444" id="t_As">A</span>
<svg style="left:257.5px;top:13.5px" width="5" height="4"><path d="M0.5 0.8 L2.5 3.2 L4.5 0.8" fill="none" stroke="#2b7cd3" stroke-width="1"/></svg>
<div class="sep" style="left:267px;top:12px;height:20px"></div>
<span class="t" style="left:274px;top:15px;font-size:13px;color:#444" id="t_Aa">Aa</span>
<svg class="a" style="left:293.3px;top:20px" width="5.4" height="3.7"><path d="M0 0 L2.7 2.7 L5.4 0" fill="none" stroke="#444" stroke-width="1.15"/></svg>
<div class="sep" style="left:308px;top:12px;height:20px"></div>
<span class="t" style="left:315px;top:13px;font-size:15px;color:#444" id="t_Ac">A</span>
<svg style="left:323px;top:19px" width="10" height="10" viewBox="0 0 10 10"><path d="M6 1 L9.4 4 L5.2 9 L1.8 6 Z" fill="#f0b6ec" stroke="#b146c2" stroke-width="1"/><path d="M3.5 3.9 L7 7" stroke="#b146c2" stroke-width=".8"/></svg>
<span class="t" style="left:89px;top:44px;font-size:13.5px;font-weight:bold;color:#333" id="t_N">N</span>
<span class="t" style="left:110px;top:44px;font-size:13.5px;font-style:italic;color:#444" id="t_K">K</span>
<span class="t" style="left:132px;top:44px;font-size:13.5px;color:#444;text-decoration:underline;text-underline-offset:2px" id="t_S">S</span>
<svg class="a" style="left:149.8px;top:50px" width="5.4" height="3.7"><path d="M0 0 L2.7 2.7 L5.4 0" fill="none" stroke="#444" stroke-width="1.15"/></svg>
<span class="t" style="left:164px;top:45px;font-size:12.5px;color:#444;text-decoration:line-through" id="t_ab">ab</span>
<span class="t" style="left:188px;top:45px;font-size:13px;font-weight:bold;color:#444" id="t_x2">x</span>
<span class="t" style="left:195px;top:53px;font-size:7px;color:#2b7cd3">2</span>
<span class="t" style="left:208px;top:45px;font-size:13px;font-weight:bold;color:#444" id="t_x2b">x</span>
<span class="t" style="left:216px;top:42px;font-size:7px;color:#2b7cd3">2</span>
<div class="sep" style="left:226px;top:42px;height:20px"></div>
<svg style="left:233px;top:42px" width="17" height="17" viewBox="0 0 17 17"><text x="8.5" y="15" font-family="Liberation Sans, sans-serif" font-size="17" font-weight="bold" text-anchor="middle" fill="#fff" stroke="#2b7cd3" stroke-width="1.4">A</text></svg>
<svg class="a" style="left:252.3px;top:50px" width="5.4" height="3.7"><path d="M0 0 L2.7 2.7 L5.4 0" fill="none" stroke="#444" stroke-width="1.15"/></svg>
<svg style="left:267px;top:40px" width="17" height="19" viewBox="0 0 17 19"><path d="M10 1 L14.5 5.5 L8.5 11.5 L4.5 10.8 L4 7 Z M4.3 10.5 L2.5 12.5 H5.5" fill="#f4f1f0" stroke="#555" stroke-width="1.1"/><rect x="0" y="14.5" width="16" height="4.2" fill="#2fe32f"/></svg>
<svg class="a" style="left:287.3px;top:50px" width="5.4" height="3.7"><path d="M0 0 L2.7 2.7 L5.4 0" fill="none" stroke="#444" stroke-width="1.15"/></svg>
<span class="t" style="left:304.8px;top:42px;font-size:14px;color:#444" id="t_Af">A</span>
<div class="a" style="left:302px;top:54.8px;width:15.4px;height:4px;background:#e81123"></div>
<svg class="a" style="left:321.3px;top:50px" width="5.4" height="3.7"><path d="M0 0 L2.7 2.7 L5.4 0" fill="none" stroke="#444" stroke-width="1.15"/></svg>
<span class="t" style="left:184px;top:77px;left:184.5px;letter-spacing:-0.495px" id="t_fuente">Fuente</span>
<svg style="left:330px;top:79px" width="8" height="8" viewBox="0 0 8 8"><path d="M0.5 5 V0.5 H5" fill="none" stroke="#605e5c" stroke-width="1"/><path d="M3 3 L7 7 M7 3.8 V7 H3.8" fill="none" stroke="#605e5c" stroke-width="1"/></svg>
<div class="sep" style="left:341px;top:5px;height:82px"></div>
<div class="hl" style="left:349px;top:10px;width:35px;height:23px"></div>
<svg style="left:352px;top:14px" width="16" height="14" viewBox="0 0 16 14"><path d="M5 2 H16 M5 7 H16 M5 12 H16" stroke="#444" stroke-width="1.1"/><rect x="0" y="0.6" width="2.8" height="2.8" fill="#2b7cd3"/><rect x="0" y="5.6" width="2.8" height="2.8" fill="#2b7cd3"/><rect x="0" y="10.6" width="2.8" height="2.8" fill="#2b7cd3"/></svg>
<svg class="a" style="left:372.3px;top:20px" width="5.4" height="3.7"><path d="M0 0 L2.7 2.7 L5.4 0" fill="none" stroke="#444" stroke-width="1.15"/></svg>
<svg style="left:386px;top:14px" width="16" height="14" viewBox="0 0 16 14"><path d="M5 2 H16 M5 7 H16 M5 12 H16" stroke="#444" stroke-width="1.1"/><path d="M1.2 0.3 V3.7 M1.2 5.3 V8.7 M1.2 10.3 V13.7" stroke="#2b7cd3" stroke-width="1.1"/></svg>
<svg class="a" style="left:407.3px;top:20px" width="5.4" height="3.7"><path d="M0 0 L2.7 2.7 L5.4 0" fill="none" stroke="#444" stroke-width="1.15"/></svg>
<svg style="left:420px;top:14px" width="17" height="14" viewBox="0 0 17 14"><path d="M4 2 H15 M8 7 H17 M11 12 H17" stroke="#444" stroke-width="1.1"/><path d="M1 0.5 V3.5 M4.5 5.5 H6.2 V8.5 M8 10.5 H9.5 V13.5" stroke="#2b7cd3" stroke-width="1" fill="none"/></svg>
<svg class="a" style="left:440.3px;top:20px" width="5.4" height="3.7"><path d="M0 0 L2.7 2.7 L5.4 0" fill="none" stroke="#444" stroke-width="1.15"/></svg>
<div class="sep" style="left:456px;top:12px;height:20px"></div>
<svg style="left:463px;top:14px" width="16" height="14" viewBox="0 0 16 14"><path d="M0 1 H15 M8 5 H15 M8 9 H15 M0 13 H15" stroke="#444" stroke-width="1.1"/><path d="M6 7 H0.8 M3 4.8 L0.8 7 L3 9.2" stroke="#2b7cd3" stroke-width="1.1" fill="none"/></svg>
<svg style="left:484px;top:14px" width="16" height="14" viewBox="0 0 16 14"><path d="M0 1 H15 M8 5 H15 M8 9 H15 M0 13 H15" stroke="#444" stroke-width="1.1"/><path d="M0.5 7 H5.8 M3.6 4.8 L5.8 7 L3.6 9.2" stroke="#2b7cd3" stroke-width="1.1" fill="none"/></svg>
<div class="sep" style="left:506px;top:12px;height:20px"></div>
<span class="t" style="left:512.5px;top:12.5px;font-size:9.5px;font-weight:bold;color:#2b7cd3">A</span>
<span class="t" style="left:512.8px;top:20.5px;font-size:9.5px;font-weight:bold;color:#444">Z</span>
<svg style="left:521px;top:13px" width="8" height="16" viewBox="0 0 8 16"><path d="M4 0 V15 M0.8 11.5 L4 15 L7.2 11.5" stroke="#444" stroke-width="1.1" fill="none"/></svg>
<div class="sep" style="left:535px;top:12px;height:20px"></div>
<span class="t" style="left:545px;top:13px;font-size:15px;color:#333;font-weight:bold" id="t_pil">¶</span>
<div class="hl" style="left:349px;top:41px;width:21px;height:22px"></div>
<svg style="left:352.5px;top:45.4px" width="15" height="14" viewBox="0 0 15 14"><path d="M0 1 H14 M0 4.75 H10 M0 8.5 H14 M0 12.25 H10 " stroke="#3a3a3a" stroke-width="1.05" fill="none"/></svg>
<svg style="left:373.5px;top:45.4px" width="15" height="14" viewBox="0 0 15 14"><path d="M0 1 H14 M2.5 4.75 H11.5 M0 8.5 H14 M2.5 12.25 H11.5 " stroke="#3a3a3a" stroke-width="1.05" fill="none"/></svg>
<svg style="left:394.5px;top:45.4px" width="15" height="14" viewBox="0 0 15 14"><path d="M0 1 H14 M4.5 4.75 H14 M0 8.5 H14 M4.5 12.25 H14 " stroke="#3a3a3a" stroke-width="1.05" fill="none"/></svg>
<svg style="left:415.5px;top:45.4px" width="15" height="14" viewBox="0 0 15 14"><path d="M0 1 H14 M0 4.75 H14 M0 8.5 H14 M0 12.25 H14 " stroke="#3a3a3a" stroke-width="1.05" fill="none"/></svg>
<div class="sep" style="left:436px;top:42px;height:20px"></div>
<svg style="left:442px;top:43px" width="17" height="16" viewBox="0 0 17 16"><path d="M7 2 H17 M7 6 H17 M7 10 H17 M7 14 H17" stroke="#444" stroke-width="1.1"/><path d="M2.5 1 V15 M0.5 3.2 L2.5 1 L4.5 3.2 M0.5 12.8 L2.5 15 L4.5 12.8" stroke="#2b7cd3" stroke-width="1.1" fill="none"/></svg>
<svg class="a" style="left:461.3px;top:50px" width="5.4" height="3.7"><path d="M0 0 L2.7 2.7 L5.4 0" fill="none" stroke="#444" stroke-width="1.15"/></svg>
<div class="sep" style="left:477px;top:42px;height:20px"></div>
<svg style="left:484px;top:42px" width="17" height="19" viewBox="0 0 17 19"><path d="M6 3.5 L12 9 L7.5 13.5 L2 8 Z M6 3.5 V0.8" fill="#f4f1f0" stroke="#555" stroke-width="1.1"/><path d="M13.5 9.5 C13.5 9.5 15.5 12 15.5 13 A1.6 1.6 0 0 1 12.2 13 C12.2 12 13.5 9.5 13.5 9.5 Z" fill="#2b7cd3"/><rect x="0.5" y="15.2" width="15" height="3.3" fill="#fff" stroke="#8a8886" stroke-width="1"/></svg>
<svg class="a" style="left:505.3px;top:50px" width="5.4" height="3.7"><path d="M0 0 L2.7 2.7 L5.4 0" fill="none" stroke="#444" stroke-width="1.15"/></svg>
<svg style="left:519px;top:43px" width="16" height="16" viewBox="0 0 16 16"><path d="M0.5 0.5 H15.5 V15.5 H0.5 Z M8 0.5 V15.5 M0.5 8 H15.5" fill="none" stroke="#666" stroke-width="1" stroke-dasharray="1.3 1.3"/><path d="M0 15.4 H16" stroke="#333" stroke-width="1.3"/></svg>
<svg class="a" style="left:540.3px;top:50px" width="5.4" height="3.7"><path d="M0 0 L2.7 2.7 L5.4 0" fill="none" stroke="#444" stroke-width="1.15"/></svg>
<span class="t" style="left:429px;top:77px;left:429.5px;letter-spacing:-0.551px" id="t_parrafo">Párrafo</span>
<svg style="left:556px;top:79px" width="8" height="8" viewBox="0 0 8 8"><path d="M0.5 5 V0.5 H5" fill="none" stroke="#605e5c" stroke-width="1"/><path d="M3 3 L7 7 M7 3.8 V7 H3.8" fill="none" stroke="#605e5c" stroke-width="1"/></svg>
<div class="sep" style="left:566px;top:5px;height:82px"></div>
<div class="box" style="left:576px;top:6px;width:286px;height:56px"></div>
<div class="a" style="left:847px;top:7px;width:14px;height:54px;background:#f7f7f7;border-left:1px solid #d2d0ce"></div>
<div class="a" style="left:847px;top:24px;width:15px;height:1px;background:#d2d0ce"></div>
<div class="a" style="left:847px;top:43px;width:15px;height:1px;background:#d2d0ce"></div>
<svg style="left:852px;top:13px" width="6" height="4"><path d="M0.5 3.5 L3 1 L5.5 3.5" fill="none" stroke="#b0aeac" stroke-width="1"/></svg>
<svg class="a" style="left:851.3px;top:33px" width="5.4" height="3.7"><path d="M0 0 L2.7 2.7 L5.4 0" fill="none" stroke="#555" stroke-width="1.15"/></svg>
<svg style="left:851px;top:48px" width="7" height="8" viewBox="0 0 7 8"><path d="M0 0.6 H7" stroke="#555" stroke-width="1.1"/><path d="M0.5 3.5 L3.5 6.5 L6.5 3.5" fill="none" stroke="#555" stroke-width="1.1"/></svg>
<span class="t" style="left:583px;top:19px;font-size:13px;color:#222;left:582.8px;letter-spacing:-0.254px" id="t_s1">AaBbCcD</span>
<span class="t" style="left:587px;top:44px;font-size:11px;left:587.3px;letter-spacing:0.097px" id="t_s1n">¶ Normal</span>
<span class="t" style="left:650px;top:19px;font-size:13px;color:#222;left:650.5px;letter-spacing:-0.368px" id="t_s2">AaBbCcD</span>
<span class="t" style="left:649px;top:44px;font-size:11px;left:649.2px;letter-spacing:-0.366px" id="t_s2n">¶ Sin espa...</span>
<div class="a" style="left:712px;top:8px;width:61.5px;height:30px;overflow:hidden"><span class="t" style="left:5.9px;top:10px;font-size:17.5px;color:#6a82c0;left:5.9px;letter-spacing:-0.517px" id="t_s3">AaBbCc</span></div>
<span class="t" style="left:727px;top:44px;font-size:11px;left:727.4px;letter-spacing:-0.198px" id="t_s3n">Título 1</span>
<div class="a" style="left:780px;top:8px;width:60.5px;height:30px;overflow:hidden"><span class="t" style="left:5.6px;top:11px;font-size:14px;color:#6a82c0;left:5.6px;letter-spacing:-0.367px" id="t_s4">AaBbCcD</span></div>
<span class="t" style="left:794px;top:44px;font-size:11px;left:794.4px;letter-spacing:-0.011px" id="t_s4n">Título 2</span>
<span class="t" style="left:696px;top:77px;left:696.0px;letter-spacing:-0.480px" id="t_estilos">Estilos</span>
<svg style="left:860px;top:79px" width="8" height="8" viewBox="0 0 8 8"><path d="M0.5 5 V0.5 H5" fill="none" stroke="#605e5c" stroke-width="1"/><path d="M3 3 L7 7 M7 3.8 V7 H3.8" fill="none" stroke="#605e5c" stroke-width="1"/></svg>
<div class="sep" style="left:871px;top:5px;height:82px"></div>
<svg style="left:883px;top:6px" width="15" height="15" viewBox="0 0 15 15"><circle cx="9.3" cy="5.4" r="4.3" fill="none" stroke="#444" stroke-width="1.2"/><path d="M6.2 8.6 L0.8 14" stroke="#444" stroke-width="1.3"/></svg>
<span class="t" style="left:900px;top:9px;font-size:11.4px;left:900.4px;letter-spacing:-0.476px" id="t_buscar">Buscar</span>
<svg class="a" style="left:942.8px;top:13px" width="5.4" height="3.7"><path d="M0 0 L2.7 2.7 L5.4 0" fill="none" stroke="#444" stroke-width="1.15"/></svg>
<svg style="left:882px;top:27px" width="15" height="16" viewBox="0 0 15 16"><path d="M1 7.5 C1 4 5 3.5 6.5 6 M6.8 3.5 V6.3 H4" fill="none" stroke="#2b7cd3" stroke-width="1.1"/><path d="M1.5 10 C2 13.5 5.5 13.5 6.5 12 M1 12.8 V10 H3.8" fill="none" stroke="#2b7cd3" stroke-width="1.1"/></svg>
<span class="t" style="left:890px;top:26px;font-size:9px;color:#444">b</span>
<span class="t" style="left:891px;top:36px;font-size:8.5px;color:#2b7cd3">c</span>
<span class="t" style="left:900px;top:30px;font-size:11.4px;left:900.4px;letter-spacing:-0.532px" id="t_reemp">Reemplazar</span>
<svg style="left:884px;top:49px" width="11" height="15" viewBox="0 0 11 15"><path d="M1 0.8 V12.2 L3.8 9.6 L6 14.2 L7.8 13.3 L5.6 8.9 H9.5 Z" fill="#fff" stroke="#333" stroke-width="1"/></svg>
<span class="t" style="left:900px;top:51.6px;font-size:11.4px;left:900.4px;letter-spacing:-0.312px" id="t_selec">Seleccionar</span>
<svg class="a" style="left:959.8px;top:56px" width="5.4" height="3.7"><path d="M0 0 L2.7 2.7 L5.4 0" fill="none" stroke="#444" stroke-width="1.15"/></svg>
<span class="t" style="left:907px;top:77px;left:907.4px;letter-spacing:-0.323px" id="t_edicion">Edición</span>
<div class="sep" style="left:980px;top:5px;height:82px"></div>
</div></div>
<div class="a" id="zm"><div class="a gl">
<div class="a" style="left:2px;top:1.5px;width:240px;height:136px;background:#222"></div>
<div class="a" style="left:54px;top:2px;width:135px;height:134.4px;background:#00897b"></div>
<span class="t" style="left:54px;top:32.5px;width:135px;text-align:center;font-size:73.5px;color:#fff;transform:scaleX(.93)" id="t_Y">Y</span>
<div class="a" style="left:0;top:139px;width:244px;height:139.1px;background:linear-gradient(180deg,#e8f08f 0%,#dfeb80 28%,#93e060 40%,#7edb50 50%,#4fc53c 56%,#52c63e 72%,#c9e774 80%,#ecf08c 86%,#eef28e 100%)"></div>
<div class="a" style="left:2px;top:139px;width:240px;height:2px;background:#e6ef90"></div>
<div class="a" style="left:2px;top:275.7px;width:240px;height:2.4px;background:#f0f28c"></div>
<svg style="left:2px;top:141px" width="240" height="134.5" viewBox="0 0 240 134.5">
<defs>
<filter id="b1" x="-10%" y="-10%" width="120%" height="120%"><feGaussianBlur stdDeviation="6"/></filter>
<filter id="b2" x="-10%" y="-10%" width="120%" height="120%"><feGaussianBlur stdDeviation="10"/></filter>
<filter id="b0" x="-10%" y="-10%" width="120%" height="120%"><feGaussianBlur stdDeviation="1.2"/></filter>
<linearGradient id="wl" x1="0" y1="0" x2="0" y2="1"><stop offset="0" stop-color="#e2ecef"/><stop offset="1" stop-color="#cbdbe0"/></linearGradient>
<linearGradient id="wr" x1="0" y1="0" x2="1" y2="0"><stop offset="0" stop-color="#e6e2d3"/><stop offset="0.45" stop-color="#ebe7d8"/><stop offset="0.8" stop-color="#e3e0d3"/><stop offset="1" stop-color="#dcdad0"/></linearGradient>
<linearGradient id="fc" x1="0" y1="0" x2="1" y2="0.25"><stop offset="0" stop-color="#a98273"/><stop offset="0.35" stop-color="#cda191"/><stop offset="0.8" stop-color="#d5ad9d"/><stop offset="1" stop-color="#c49988"/></linearGradient>
<clipPath id="c1"><rect x="0" y="0" width="240" height="134.5"/></clipPath>
</defs>
<g clip-path="url(#c1)">
<rect x="0" y="0" width="240" height="135" fill="url(#wr)"/>
<rect x="-2" y="0" width="66" height="135" fill="url(#wl)" filter="url(#b0)"/>
<path d="M221 0 H242 V135 H231 Z" fill="#eef0ec" filter="url(#b0)"/>
<path d="M221.5 0 L224.5 0 L233 135 L229.5 135 Z" fill="#fdfdfb" filter="url(#b0)"/>
<path d="M228 20 L232 20 L236 120 L233 120 Z" fill="#dfe1dc" filter="url(#b0)" opacity=".8"/>
<g transform="translate(27,-2) scale(0.2098)">
<g filter="url(#b2)">
<path d="M400 40 C470 40 540 70 580 140 C610 195 640 250 655 320 C668 380 660 440 630 462 C612 474 604 476 606 490 C640 520 700 560 745 600 L770 680 L-40 680 L-20 590 C40 560 90 500 130 440 C165 385 190 310 215 230 C240 140 300 40 400 40 Z" fill="#08090b"/>
</g>
<g filter="url(#b1)">
<path d="M405 98 C340 100 296 150 286 240 C280 320 300 400 345 465 C375 505 410 532 445 532 C490 530 530 480 556 410 C574 360 580 300 572 240 C562 160 500 98 405 98 Z" fill="url(#fc)"/>
<ellipse cx="592" cy="305" rx="14" ry="28" fill="#b98e7e"/>
<path d="M360 470 C390 520 420 540 450 536 C490 530 520 500 540 460 L545 560 L380 580 Z" fill="#8e695c" opacity=".85"/>
<path d="M300 560 C360 600 520 600 600 520 L760 640 L760 700 L200 700 Z" fill="#0a0a0c"/>
<ellipse cx="346" cy="268" rx="40" ry="20" fill="#7d5a50" opacity=".55"/><ellipse cx="482" cy="264" rx="42" ry="20" fill="#7d5a50" opacity=".5"/><path d="M290 290 C294 380 330 455 385 505 C352 420 336 350 338 290 Z" fill="#94705f" opacity=".45"/><ellipse cx="430" cy="400" rx="62" ry="44" fill="#b08676" opacity=".32"/><path d="M306 243 C330 232 360 232 384 240 M440 234 C470 226 500 230 524 244" stroke="#3a2623" stroke-width="11" fill="none" opacity=".8"/>
<path d="M312 272 C330 264 356 266 372 276 M446 270 C466 260 494 262 512 272" stroke="#2c1d1b" stroke-width="12" fill="none" opacity=".85"/>
<path d="M418 290 C414 320 404 340 400 352 C408 364 430 364 440 356" stroke="#9a6f62" stroke-width="10" fill="none" opacity=".8"/>
<path d="M384 420 C410 412 440 414 476 426" stroke="#8a514b" stroke-width="11" fill="none" opacity=".9"/>
<path d="M390 455 C420 462 450 462 470 456" stroke="#a87e70" stroke-width="8" fill="none" opacity=".6"/>
<path d="M540 655 C548 620 566 596 590 575 C596 548 602 528 612 520 C628 524 626 546 628 560 C650 520 680 450 706 418 C722 406 744 410 748 426 C752 446 740 470 742 486 C756 500 760 524 752 548 C748 590 728 640 700 680 L540 680 Z" fill="#caa18c"/>
<path d="M700 430 C690 470 668 520 650 560 M744 490 C730 530 716 560 700 590" stroke="#a07a68" stroke-width="7" fill="none" opacity=".7"/>
<path d="M712 424 C704 450 690 480 680 505" stroke="#e2c0ae" stroke-width="10" fill="none" opacity=".7"/>
</g>
</g>
<rect x="0" y="115" width="86" height="20" fill="#000" opacity=".76"/>
</g>
</svg>
<span class="t" style="left:6px;top:260.8px;font-size:11.6px;font-weight:bold;color:#fff;text-shadow:0 0 1px #000;left:6.2px;letter-spacing:0.064px" id="t_fab">Fabiola Parra</span>
<div class="a" style="left:2px;top:279.3px;width:240px;height:135.6px;background:#222"></div>
<span class="t" style="left:0;top:339px;width:244px;text-align:center;font-size:19.5px;color:#fff" id="t_jose">Jose</span>
<div class="a" style="left:2px;top:418.7px;width:240px;height:136.3px;background:#000"></div>
<svg style="left:32px;top:419px" width="180" height="134.5" viewBox="0 0 180 134.5">
<defs>
<filter id="b3" x="-10%" y="-10%" width="120%" height="120%"><feGaussianBlur stdDeviation="5.5"/></filter>
<filter id="b4" x="-10%" y="-10%" width="120%" height="120%"><feGaussianBlur stdDeviation="10"/></filter>
<radialGradient id="fc3" cx="0.5" cy="0.42" r="0.62"><stop offset="0" stop-color="#d6b1a1"/><stop offset="0.7" stop-color="#c49b8a"/><stop offset="1" stop-color="#9b7565"/></radialGradient>
<clipPath id="c3"><rect x="0" y="0" width="180" height="134.5"/></clipPath>
</defs>
<g clip-path="url(#c3)">
<rect x="0" y="0" width="180" height="135" fill="#e5e1d8"/>
<g transform="translate(-5.3,-3.8) scale(0.213)">
<g filter="url(#b3)">
<path d="M200 10 H880 V50 L800 140 L365 150 L350 80 L200 80 Z" fill="#dfdfdc"/>
<path d="M800 140 L880 50 V660 H800 Z" fill="#efece5"/>
<rect x="640" y="278" width="100" height="190" fill="#e2ded5" stroke="#cfcac0" stroke-width="6"/>
<rect x="15" y="10" width="190" height="225" fill="#e3dad3"/>
<rect x="195" y="80" width="158" height="140" fill="#f6f4e8"/>
<path d="M15 240 H170 L90 660 H15 Z" fill="#eceae5"/>
<path d="M15 285 H88 L60 470 L15 520 Z" fill="#866a5f"/>
<path d="M15 240 H100 V275 H15 Z" fill="#d8c9c0"/>
<path d="M196 242 L338 232 L326 440 L240 545 L132 545 Z" fill="#dacfbb"/>
<path d="M122 575 H232 L216 660 H108 Z" fill="#e6dfd2"/>
<path d="M15 56 L30 44 L182 218 L166 230 Z" fill="#92735f"/>
<path d="M15 10 H56 L40 120 L15 100 Z" fill="#a98b7a"/>
<path d="M182 10 H206 L188 232 H166 Z" fill="#92735f"/>
<path d="M165 228 L362 208 L364 230 L168 250 Z" fill="#8f705b"/>
<path d="M338 214 L364 212 L352 418 L326 442 Z" fill="#8f705b"/>
<path d="M166 236 L196 236 L118 660 L88 660 Z" fill="#8f705b"/>
<path d="M132 540 H244 V572 H126 Z" fill="#9b7c64"/>
<rect x="92" y="420" width="14" height="22" fill="#bdb5ab"/>
</g>
<g filter="url(#b4)">
<path d="M520 108 C580 108 630 150 636 215 C634 270 640 325 672 380 C720 420 780 490 805 560 L840 680 L330 680 L350 470 C395 440 418 395 424 330 C418 270 418 215 430 180 C450 130 480 108 520 108 Z" fill="#30272a"/>
</g>
<g filter="url(#b3)">
<path d="M215 660 C235 590 270 510 340 472 L420 470 L430 660 Z" fill="#43464f"/>
<path d="M290 520 C310 490 350 480 372 492 L380 600 L330 640 L280 640 Z" fill="#6c7684" opacity=".6"/>
<path d="M780 500 C820 540 845 600 856 670 L740 670 Z" fill="#433e42"/>
<path d="M468 410 H584 L580 490 H474 Z" fill="#b18878"/>
<path d="M432 476 C470 500 520 530 596 470 L606 670 H418 Z" fill="#8f5d61"/>
<path d="M470 500 C500 540 540 540 580 500 L560 560 C530 570 500 560 480 540 Z" fill="#7a4b50" opacity=".8"/>
<path d="M398 420 C380 500 392 580 410 670 L450 670 C430 590 428 500 440 440 Z" fill="#30272a"/>
<path d="M580 400 C640 420 740 470 790 540 L830 670 H600 C590 590 570 480 580 400 Z" fill="#30272a"/>
<path d="M440 492 L434 640" stroke="#eadfda" stroke-width="9" stroke-dasharray="14 10" fill="none"/>
<path d="M524 168 C470 168 432 215 430 280 C432 350 470 430 526 442 C584 430 622 350 624 280 C622 215 580 168 524 168 Z" fill="url(#fc3)"/>
<ellipse cx="482" cy="266" rx="34" ry="17" fill="#7d5a50" opacity=".5"/><ellipse cx="578" cy="266" rx="34" ry="17" fill="#7d5a50" opacity=".5"/><ellipse cx="527" cy="382" rx="52" ry="32" fill="#b08676" opacity=".3"/><path d="M452 248 C470 238 496 238 510 246 M548 246 C566 238 590 238 606 250" stroke="#3c2925" stroke-width="10" fill="none" opacity=".8"/>
<path d="M456 270 C470 262 494 262 506 270 M552 270 C566 262 590 262 602 272" stroke="#2a1c1a" stroke-width="11" fill="none" opacity=".85"/>
<path d="M526 280 C524 300 516 318 514 326 C522 334 540 334 548 326" stroke="#9c7464" stroke-width="9" fill="none" opacity=".8"/>
<path d="M492 376 C512 370 540 370 562 378" stroke="#8d5751" stroke-width="11" fill="none" opacity=".9"/>
</g>
</g>
</g>
</svg>
</div></div>
</body></html>
